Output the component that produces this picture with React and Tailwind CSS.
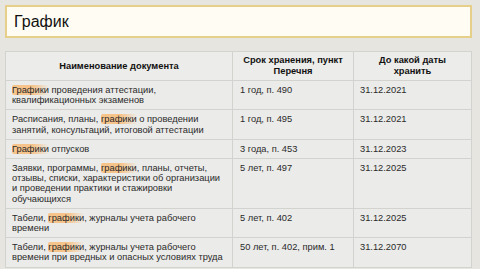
import React from 'react';

const Hl = ({ children }) => (
  <span className="bg-linear-to-r from-[#f6c38a] from-55% to-[#f6c38a00] rounded-[2px]">{children}</span>
);

const rows = [
  {
    name: (
      <>
        <Hl>Графики</Hl> проведения аттестации,
        <br />
        квалификационных экзаменов
      </>
    ),
    term: '1 год, п. 490',
    date: '31.12.2021',
  },
  {
    name: (
      <>
        Расписания, планы, <Hl>графики</Hl> о проведении
        <br />
        занятий, консультаций, итоговой аттестации
      </>
    ),
    term: '1 год, п. 495',
    date: '31.12.2021',
  },
  {
    name: (
      <>
        <Hl>Графики</Hl> отпусков
      </>
    ),
    term: '3 года, п. 453',
    date: '31.12.2023',
  },
  {
    name: (
      <>
        Заявки, программы, <Hl>графики</Hl>, планы, отчеты,
        <br />
        отзывы, списки, характеристики об организации
        <br />
        и проведении практики и стажировки
        <br />
        обучающихся
      </>
    ),
    term: '5 лет, п. 497',
    date: '31.12.2025',
  },
  {
    name: (
      <>
        Табели, <Hl>графики</Hl>, журналы учета рабочего
        <br />
        времени
      </>
    ),
    term: '5 лет, п. 402',
    date: '31.12.2025',
  },
  {
    name: (
      <>
        Табели, <Hl>графики</Hl>, журналы учета рабочего
        <br />
        времени при вредных и опасных условиях труда
      </>
    ),
    term: '50 лет, п. 402, прим. 1',
    date: '31.12.2070',
  },
];

export default function App() {
  return (
    <div className="w-[480px] h-[269px] overflow-hidden bg-[#e6e5e0] p-[5px] font-['Liberation_Sans',Arial,sans-serif]">
      <div className="h-[33px] w-[467px] border-2 border-[#e6cf88] bg-[#fffdf3] flex items-center pl-[7px] text-[16px] text-[#111]">
        График
      </div>
      <table className="mt-[13px] w-[466px] table-fixed border-collapse border border-[#d2d2ce] bg-[#ebebe9] text-[9.3px] leading-[10.2px] text-[#2a2a2a] whitespace-nowrap">
        <colgroup>
          <col className="w-[227px]" />
          <col className="w-[121px]" />
          <col className="w-[118px]" />
        </colgroup>
        <thead>
          <tr className="h-[29px] bg-[#ececea]">
            <th className="border border-[#d2d2ce] px-[4px] py-[3px] text-center align-middle font-bold leading-[11px] text-[#111]">
              Наименование документа
            </th>
            <th className="border border-[#d2d2ce] px-[4px] py-[3px] text-center align-middle font-bold leading-[11px] text-[#111]">
              Срок хранения, пункт
              <br />
              Перечня
            </th>
            <th className="border border-[#d2d2ce] px-[4px] py-[3px] text-center align-middle font-bold leading-[11px] text-[#111]">
              До какой даты
              <br />
              хранить
            </th>
          </tr>
        </thead>
        <tbody>
          {rows.map((r, i) => (
            <tr key={i}>
              <td className="border border-[#d2d2ce] px-[6px] pt-[4px] pb-[4px] align-top">{r.name}</td>
              <td className="border border-[#d2d2ce] px-[7px] pt-[4px] pb-[4px] align-top">{r.term}</td>
              <td className="border border-[#d2d2ce] px-[6px] pt-[4px] pb-[4px] align-top">{r.date}</td>
            </tr>
          ))}
        </tbody>
      </table>
    </div>
  );
}
